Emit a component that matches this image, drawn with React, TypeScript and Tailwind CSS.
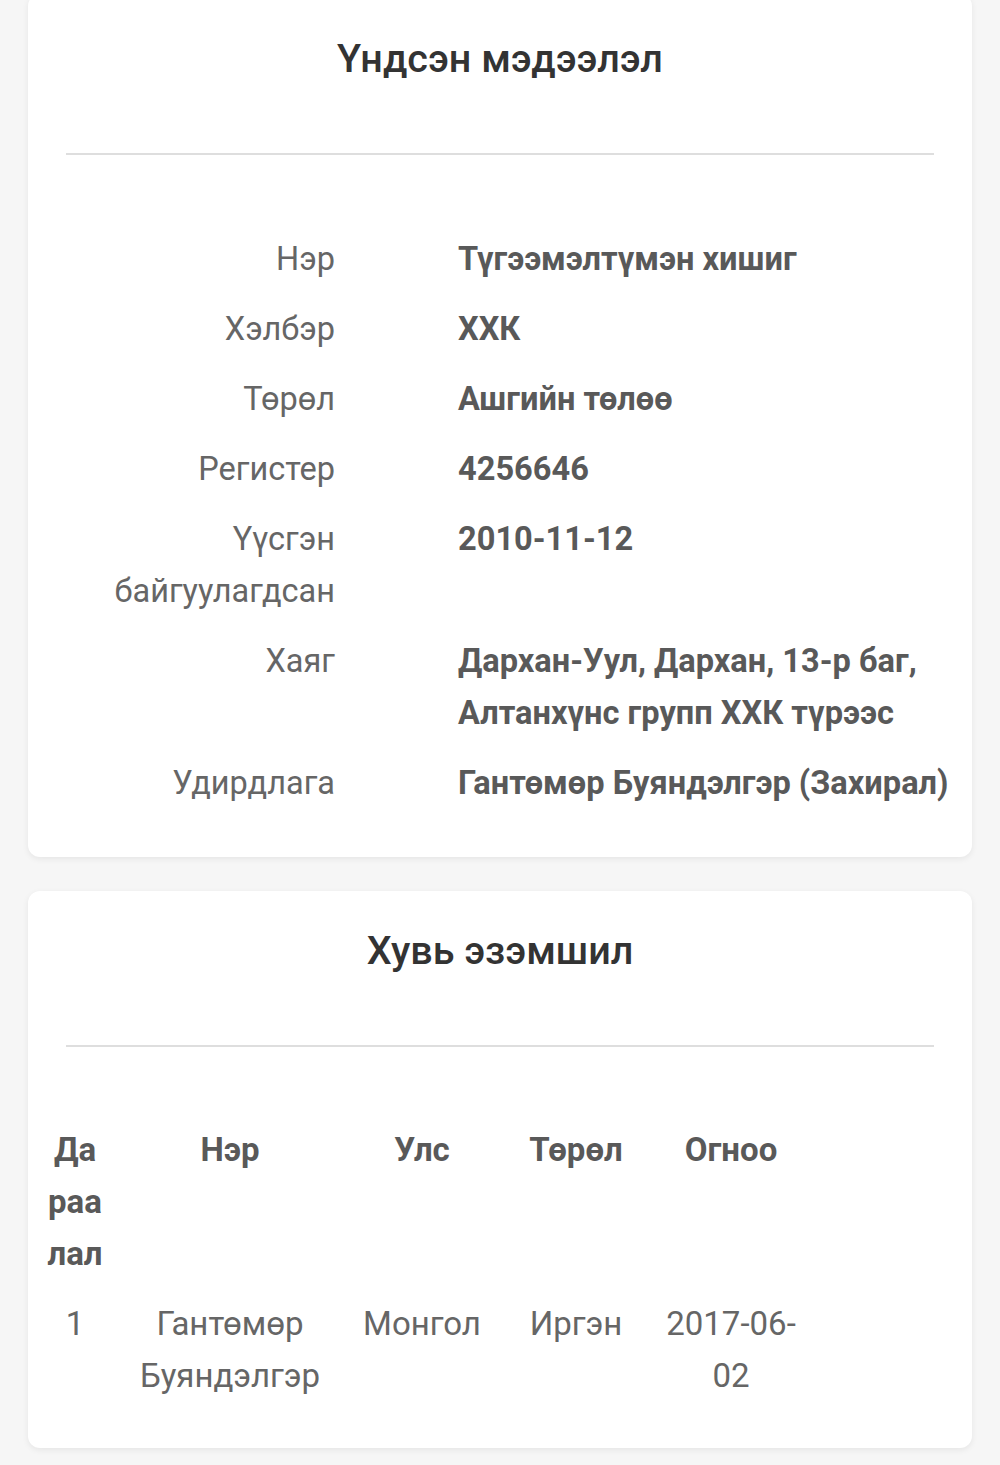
const info = [
  { label: 'Нэр', value: 'Түгээмэлтүмэн хишиг' },
  { label: 'Хэлбэр', value: 'ХХК' },
  { label: 'Төрөл', value: 'Ашгийн төлөө' },
  { label: 'Регистер', value: '4256646' },
  { label: 'Үүсгэн байгуулагдсан', value: '2010-11-12' },
  { label: 'Хаяг', value: 'Дархан-Уул, Дархан, 13-р баг, Алтанхүнс групп ХХК түрээс' },
  { label: 'Удирдлага', value: 'Гантөмөр Буяндэлгэр (Захирал)' },
];

// column widths of the ownership table
const cols = 'grid-cols-[56px_254px_130px_178px_132px]';

const Card = ({ title, className, children }: { title: string; className?: string; children: React.ReactNode }) => (
  <section className={`bg-white rounded-[12px] shadow-[0_2px_6px_rgba(0,0,0,0.07)] px-[38px] ${className ?? ''}`}>
    <h2 className="text-center text-[39.5px] leading-[57px] font-medium text-[#333]">{title}</h2>
    <div className="mt-[66px] h-[2px] bg-[#dedede]" />
    {children}
  </section>
);

export default function App() {
  return (
    <div
      className="min-h-screen bg-[#f6f6f6] px-[28px] pb-[17px] overflow-hidden"
      style={{ fontFamily: 'Roboto, "Noto Sans", sans-serif' }}
    >
      <Card title="Үндсэн мэдээлэл" className="-mt-[6px] pt-[36px] pb-[39px]">
        <div className="mt-[69px] mr-[-30px] text-[32.5px] leading-[52px]">
          {info.map((row) => (
            <div key={row.label} className="grid grid-cols-[269px_1fr] gap-x-[123px] py-[9px]">
              <div className="text-right text-[#666]">{row.label}</div>
              <div className="font-bold text-[32.6px] text-[#595959]">{row.value}</div>
            </div>
          ))}
        </div>
      </Card>

      <Card title="Хувь эзэмшил" className="mt-[34px] pt-[31px] pb-[37px]">
        <div className="mt-[68px] -ml-[19px] text-[33px] leading-[52px] text-center">
          <div className={`grid ${cols} py-[9px] font-bold text-[#595959]`}>
            <div>
              Да
              <br />
              раа
              <br />
              лал
            </div>
            <div>Нэр</div>
            <div>Улс</div>
            <div>Төрөл</div>
            <div>Огноо</div>
          </div>
          <div className={`grid ${cols} py-[9px] text-[#666]`}>
            <div>1</div>
            <div>Гантөмөр Буяндэлгэр</div>
            <div>Монгол</div>
            <div>Иргэн</div>
            <div>
              2017-06-
              <br />
              02
            </div>
          </div>
        </div>
      </Card>
    </div>
  );
}
